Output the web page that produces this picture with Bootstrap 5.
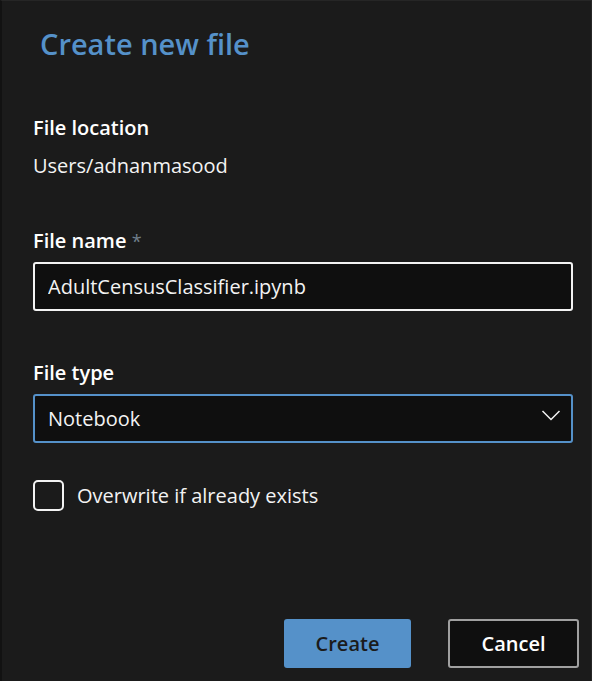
<!DOCTYPE html>
<html lang="en">
<head>
<meta charset="utf-8">
<meta name="viewport" content="width=device-width, initial-scale=1">
<title>Create new file</title>
<link href="https://cdn.jsdelivr.net/npm/bootstrap@5.3.0/dist/css/bootstrap.min.css" rel="stylesheet">
<style>
body { font-family: "Open Sans", "Noto Sans", sans-serif; font-size: 20px; line-height: 28px; background: #1b1b1b; color: #f3f3f3; }
.panel { border-left: 2px solid #121212; border-top: 1px solid #262626; border-right: 1px solid #262626; padding: 23px 18px 13px 31px; }
.panel-title { font-size: 29px; line-height: 40px; font-weight: 600; color: #5591c9; margin: 0 0 50px 7px; }
.field-label { font-weight: 600; font-size: 20px; line-height: 28px; color: #fff; margin-bottom: 7px; }
.location { margin-bottom: 45px; line-height: 32px; margin-top: 8px; }
.required-mark { color: #6f7f8c; font-weight: 400; font-size: 18px; }
.field-box, .field-box:focus { height: 49px; background-color: #0f0f0f; color: #f3f3f3; border: 2px solid #f3f3f3; border-radius: 3px; font-size: 20px; line-height: 28px; padding: 8px 13px; box-shadow: none; }
.type-box, .type-box:focus { border-color: #5591c9; background-image: none; }
.chevron { position: absolute; right: 12px; top: 15px; pointer-events: none; }
.tick, .tick:focus { width: 31px; height: 31px; margin: 0; flex: none; background-color: #1b1b1b; border: 2px solid #f3f3f3; border-radius: 3px; box-shadow: none; }
.option-row { gap: 13px; margin-top: 37px; }
.action { height: 49px; font-size: 20px; line-height: 28px; font-weight: 600; border-radius: 3px; padding: 0 16px; }
.action-create { width: 127px; background: #5591c9; color: #1b1b1b; }
.action-cancel { width: 131px; background: #0f0f0f; color: #fff; border: 2px solid #a0a0a0; }
.actions { gap: 37px; margin-right: -6px; }
</style>
<script src="https://cdn.jsdelivr.net/npm/bootstrap@5.3.0/dist/js/bootstrap.bundle.min.js" defer></script>
</head>
<body>
<form class="panel d-flex flex-column min-vh-100">
  <h1 class="panel-title">Create new file</h1>

  <h2 class="field-label mb-0">File location</h2>
  <p class="location">Users/adnanmasood</p>

  <div class="mb-5">
    <label class="field-label d-block" for="fileName">File name <span class="required-mark">*</span></label>
    <input class="form-control field-box" id="fileName" type="text" value="AdultCensusClassifier.ipynb" required>
  </div>

  <div>
    <label class="field-label d-block" for="fileType">File type</label>
    <div class="position-relative">
      <select class="form-select field-box type-box" id="fileType">
        <option selected>Notebook</option>
        <option>Python</option>
        <option>Text</option>
      </select>
      <svg class="chevron" width="20" height="12" viewBox="0 0 20 12" fill="none" stroke="#f3f3f3" stroke-width="1.5" aria-hidden="true"><path d="M1.5 2 10 10.5 18.500 2"/></svg>
    </div>
  </div>

  <div class="option-row d-flex align-items-center mb-5">
    <input class="form-check-input tick" id="overwrite" type="checkbox">
    <label for="overwrite">Overwrite if already exists</label>
  </div>

  <div class="actions d-flex justify-content-end mt-auto">
    <button class="btn action action-create" type="submit">Create</button>
    <button class="btn action action-cancel" type="button">Cancel</button>
  </div>
</form>
</body>
</html>
